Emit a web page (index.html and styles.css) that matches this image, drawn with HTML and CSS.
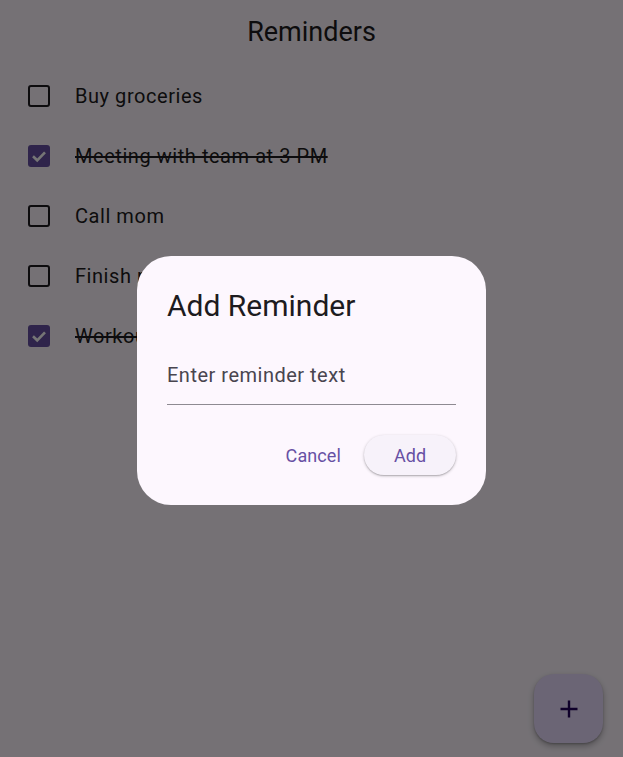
FILE: index.html
```html
<!DOCTYPE html>
<html lang="en">
<head>
<meta charset="utf-8">
<title>Reminders</title>
<link rel="stylesheet" href="styles.css">
</head>
<body>
<div class="app">
  <header class="appbar"><h1 class="appbar-title">Reminders</h1></header>
  <ul class="list">
    <li class="row"><span class="box"></span><span class="label">Buy groceries</span></li>
    <li class="row done"><span class="box"><svg viewBox="0 0 22 22" width="22" height="22"><path d="M5 11.3 L9.2 15.3 L17 7.3" fill="none" stroke="#fff" stroke-width="2.6"/></svg></span><span class="label">Meeting with team at 3 PM</span></li>
    <li class="row"><span class="box"></span><span class="label">Call mom</span></li>
    <li class="row"><span class="box"></span><span class="label">Finish project report</span></li>
    <li class="row done"><span class="box"><svg viewBox="0 0 22 22" width="22" height="22"><path d="M5 11.3 L9.2 15.3 L17 7.3" fill="none" stroke="#fff" stroke-width="2.6"/></svg></span><span class="label">Workout at the gym</span></li>
  </ul>
</div>
<button class="fab" aria-label="Add"><svg viewBox="0 0 24 24" width="24" height="24"><path d="M12 3.5v17M3.5 12h17" stroke="#21005D" stroke-width="2.4" fill="none"/></svg></button>
<div class="scrim"></div>
<div class="dialog-layer">
  <div class="dialog">
    <h2 class="dialog-title">Add Reminder</h2>
    <div class="field"><span class="placeholder">Enter reminder text</span></div>
    <div class="actions">
      <button class="btn-text">Cancel</button>
      <button class="btn-elev">Add</button>
    </div>
  </div>
</div>
</body>
</html>
```

FILE: styles.css
```css
* { box-sizing: border-box; }
html, body { margin: 0; padding: 0; }
body {
  width: 623px;
  height: 757px;
  overflow: hidden;
  background: #FEF7FF;
  font-family: Roboto, "Noto Sans", sans-serif;
  color: #1D1B20;
}
.appbar {
  height: 64px;
  display: flex;
  align-items: center;
  justify-content: center;
}
.appbar-title {
  margin: 0;
  font-size: 27px;
  font-weight: 400;
  line-height: 34px;
}
.list {
  list-style: none;
  margin: 0;
  padding: 2px 0 0 0;
}
.row {
  height: 60px;
  display: flex;
  align-items: center;
  padding-left: 28px;
  gap: 25px;
}
.box {
  width: 22px;
  height: 22px;
  border: 2.5px solid #1D1B20;
  border-radius: 3px;
  flex: none;
  display: flex;
}
.row.done .box {
  background: #6750A4;
  border: none;
}
.label {
  font-size: 20px;
  letter-spacing: 0.55px;
  line-height: 28px;
}
.row.done .label { text-decoration: line-through; }
.fab {
  position: fixed;
  right: 20px;
  bottom: 14px;
  width: 69px;
  height: 69px;
  border: none;
  border-radius: 20px;
  background: #EADDFF;
  display: flex;
  align-items: center;
  justify-content: center;
  box-shadow: 0 3px 6px rgba(0,0,0,0.3), 0 1px 2px rgba(0,0,0,0.2);
  padding: 0;
}
.fab svg { width: 24px; height: 24px; }
.scrim {
  position: fixed;
  inset: 0;
  background: rgba(0,0,0,0.54);
}
.dialog-layer {
  position: fixed;
  inset: 0;
  display: flex;
  align-items: center;
  justify-content: center;
  padding-top: 4px;
}
.dialog {
  width: 349px;
  height: 249px;
  background: #FDF7FE;
  border-radius: 34px;
  padding: 30px 30px 30px 30px;
  display: flex;
  flex-direction: column;
}
.dialog-title {
  margin: 0;
  font-size: 30px;
  font-weight: 400;
  line-height: 40px;
  color: #1D1B20;
}
.field {
  margin-top: 20px;
  height: 59px;
  border-bottom: 1.5px solid #8E8A92;
  display: flex;
  align-items: flex-start;
}
.placeholder {
  font-size: 20px;
  letter-spacing: 0.5px;
  color: #49454F;
  line-height: 28px;
  padding-top: 15px;
}
.actions {
  margin-top: auto;
  display: flex;
  justify-content: flex-end;
  align-items: center;
  gap: 8px;
}
.btn-text, .btn-elev {
  font-family: Roboto, "Noto Sans", sans-serif;
  font-size: 18px;
  letter-spacing: 0.1px;
  color: #6750A4;
  border: none;
  height: 40px;
  border-radius: 20px;
  cursor: pointer;
}
.btn-text {
  background: transparent;
  padding: 0 15px;
}
.btn-elev {
  background: #F7F2FA;
  padding: 0 30px;
  width: 92px;
  box-shadow: 0 1px 3px rgba(0,0,0,0.25), 0 1px 1px rgba(0,0,0,0.12);
}
```
